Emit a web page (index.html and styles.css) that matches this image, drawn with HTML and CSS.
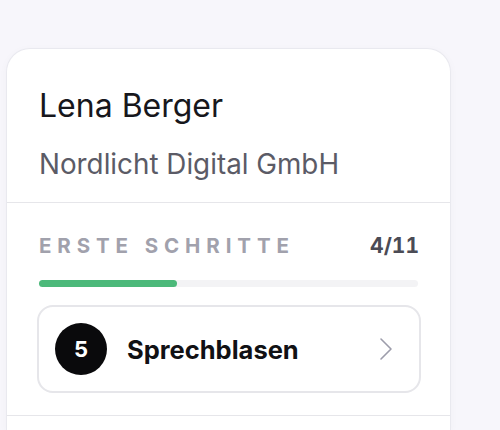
FILE: index.html
```html
<!DOCTYPE html>
<html lang="de">
<head>
<meta charset="utf-8">
<link rel="stylesheet" href="styles.css">
</head>
<body>
<div class="card">
  <div class="header">
    <div class="name">Lena Berger</div>
    <div class="company">Nordlicht Digital GmbH</div>
  </div>
  <div class="section">
    <div class="label-row">
      <span class="label">Erste Schritte</span>
      <span class="count">4/11</span>
    </div>
    <div class="track"><div class="fill" style="width: 36.36%"></div></div>
    <div class="item">
      <div class="num">5</div>
      <div class="title">Sprechblasen</div>
      <svg class="chev" width="14" height="24" viewBox="0 0 14 24"><path d="M2 2 L12 12 L2 22" fill="none" stroke="#9d9dab" stroke-width="1.6" stroke-linecap="round" stroke-linejoin="round"/></svg>
    </div>
  </div>
  <div class="next"></div>
</div>
</body>
</html>
```
FILE: styles.css
```css
* { box-sizing: border-box; }
html, body { margin: 0; padding: 0; }
body {
  background: #f7f6fb;
  font-family: Inter, "Noto Sans", sans-serif;
  height: 430px;
  overflow: hidden;
}
.card {
  margin: 48px 0 0 6px;
  width: 445px;
  height: 382px;
  background: #fff;
  border: 1px solid #e9e9ef;
  border-bottom: none;
  border-radius: 24px 24px 0 0;
  box-shadow: 0 2px 8px rgba(30, 30, 60, 0.03);
}
.header {
  padding: 37px 32px 21px;
  border-bottom: 1px solid #e6e6ea;
}
.name {
  font-size: 32px;
  line-height: 40px;
  color: #17171c;
}
.company {
  margin-top: 21px;
  font-size: 27.8px;
  line-height: 34px;
  color: #5b5b66;
}
.section {
  padding: 31px 31px 22px 32px;
  border-bottom: 1px solid #e6e6ea;
}
.label-row {
  display: flex;
  justify-content: space-between;
  align-items: center;
  line-height: 24px;
}
.label {
  text-transform: uppercase;
  font-weight: 700;
  font-size: 20.5px;
  letter-spacing: 5.9px;
  color: #a1a1ac;
}
.count {
  font-weight: 700;
  font-size: 21px;
  font-variant-numeric: tabular-nums;
  color: #4b4b55;
}
.track {
  margin-top: 22px;
  height: 7px;
  border-radius: 4px;
  background: #f3f3f5;
  margin-right: 1px;
}
.fill {
  height: 100%;
  border-radius: 4px;
  background: #4cb97a;
}
.item {
  margin: 18px -2px 0 -2px;
  height: 88px;
  border: 2px solid #e6e6ea;
  border-radius: 16px;
  display: flex;
  align-items: center;
  padding: 0 26px 0 16px;
  gap: 20px;
}
.num {
  width: 52px;
  height: 52px;
  border-radius: 50%;
  background: #0a0a0c;
  color: #fff;
  font-weight: 700;
  font-size: 22px;
  display: flex;
  align-items: center;
  justify-content: center;
  flex: none;
}
.title {
  flex: 1;
  font-weight: 700;
  font-size: 25.5px;
  color: #111114;
}
.chev { flex: none; }
```
